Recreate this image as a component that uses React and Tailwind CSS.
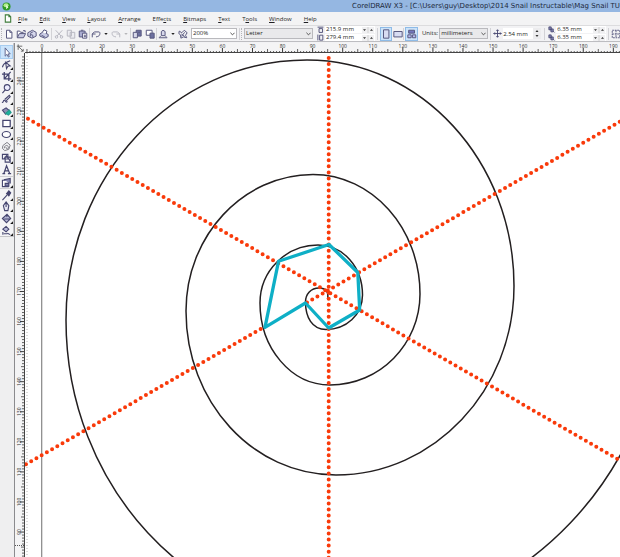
import React from "react";

const INK = "#45456f";

function Icon({ children, size = "size-[11px]", tone = "text-[#45456f]" }) {
  return (
    <svg viewBox="0 0 12 12" className={`${size} ${tone} shrink-0`} fill="none" stroke="currentColor" strokeWidth="1.2" aria-hidden="true">
      {children}
    </svg>
  );
}

const glyphs = {
  page: <path d="M3 1.5h4l2.5 2.5v7H3zM7 1.5V4h2.5" fill="#fff" />,
  open: (
    <>
      <path d="M1.5 10V2.5h3l1 1.5h3v1.5" fill="#fff" />
      <path d="M1.5 10.5 4 5.5h7.5l-2.5 5zM8.5 2h2.5v2" fill="#c9cbe4" />
    </>
  ),
  save: (
    <>
      <path d="M1 4.5 6.5 1.5 11 4v4.5L6 11 1 8.5z" fill="#d5d7ec" />
      <path d="M3.5 5.5 7 3.5M4 9V6.5l3 1V10" />
    </>
  ),
  print: (
    <>
      <path d="M1 6 5 3.500l6 3v2.500L7 11 1 8.500z" fill="#c9cbe4" />
      <path d="m4 4 2-3 3.500 1.500L8.500 6M3 7.500l4 2" fill="#fff" />
    </>
  ),
  cut: <path d="m2 1.500 6.500 7M10 1.500 3.500 8.500M1.500 9.500a1.500 1.500 0 1 0 3 0a1.500 1.500 0 1 0-3 0M7.500 9.500a1.500 1.500 0 1 0 3 0a1.500 1.500 0 1 0-3 0" />,
  copy: <path d="M1.500 1.500h5v7h-5zM5 4h5.500v7H5z" fill="#ececf1" />,
  paste: (
    <>
      <path d="M1.500 2.500h7v7h-7z" fill="#a9acd0" />
      <path d="M3.500 1.500h3M5.500 5h5v6h-5zM7 7.500h2.500M7 9.200h2.500" fill="#fff" />
    </>
  ),
  undo: <path d="M1.500 10V6h4M1.500 6 4 3.500h5.500c2 0 1.500 5-1.500 5.500l-2 .5" />,
  redo: <path d="M10.500 10V6h-4M10.500 6 8 3.500H2.500C.5 3.500 1 8.500 4 9l2 .5" />,
  importIcon: (
    <>
      <path d="M5 1.500h6v7H5z" fill="#6d70a0" />
      <path d="M1.500 4h5v6.500h-5zM7.500 4h2" fill="#d7d8ea" />
    </>
  ),
  exportIcon: (
    <>
      <path d="M1.500 1.500h7v6h-7z" fill="#fff" />
      <path d="M6 5h5v6H6z" fill="#6d70a0" />
    </>
  ),
  launch: (
    <>
      <path d="M4 8V3l2-1.500L8.500 3v5z" fill="#d7d8ea" />
      <path d="M1 10.500h10M3 8.500 2 10M9 8.500l1.500 1.500" />
    </>
  ),
  online: <path d="m1.500 2.500 3 2 3-3 3.500 3-2 3 1.500 3-4-1-3 1.500-.5-4-2-1.500zM4 6l4 3M8 4 4 9" />,
  portrait: <path d="M3 1h6.500v10H3z" fill="#d8dcf2" />,
  landscape: <path d="M1 3h10v6.500H1z" fill="#d8dcf2" />,
  allPages: (
    <>
      <path d="M2 1.500h7V5H2z" fill="#7377bd" />
      <path d="M1 7h4v3.500H1zM6.500 7h4v3.500h-4z" fill="#b7baee" />
    </>
  ),
  nudge: <path d="M6 1v10M1 6h10M4.500 2.500 6 1l1.500 1.500M4.500 9.500 6 11l1.500-1.500M2.500 4.500 1 6l1.500 1.500M9.500 4.500 11 6 9.500 7.500" />,
  snap: <path d="M1.500 1.500h9v9h-9zM1.500 6h9M6 1.500v9" strokeDasharray="2 1" />,
  widthIcon: <path d="M1 2h10M3.500 4.500h6V11h-6z" strokeWidth="1.500" />,
  heightIcon: <path d="M1.500 1v10M4.500 2H10v8.500H4.500z" strokeWidth="1.500" />,
  duplicate: <path d="M1.500 1.500h4v5h-4zM5 5h4v5H5zM9 9l2 2" fill="#8587b5" strokeWidth="1.400" />,
};

const tools = [
  { name: "Pick", art: <path d="M4.500 1v9l2-2 1.500 3 1-.5-1.300-3H10z" fill="#fff" stroke="#5a5f88" strokeWidth="1" /> },
  { name: "Shape", fly: true, art: <path d="M1.500 9C3 3 6 4 10 2M5 3.500l1 7 1.500-2.500L10 7.500z" /> },
  { name: "Crop", fly: true, art: <path d="M3.500 1v7.500H11M1 3.500h7.500V11M10.500 1 4 8" strokeWidth="1.400" /> },
  { name: "Zoom", fly: true, art: <path d="M3.500 5a3.200 3.200 0 1 0 6.400 0a3.200 3.200 0 1 0-6.400 0M4.500 7.500 1.500 11" fill="#eef" /> },
  { name: "Freehand", fly: true, art: <path d="M1 9c2 1 1-3 3-2s1 3 3 1M4 6l5-4.500L10 3 5.500 7.500" /> },
  { name: "Smart fill", fly: true, art: (
    <>
      <path d="m1.500 4.500 4-2.500 3.500 3-4 4z" fill="#8e90b4" />
      <path d="m5 8 4-3.500 2 2.500L8 10z" fill="#16b5a0" stroke="#249c8e" />
    </>
  ) },
  { name: "Rectangle", fly: true, art: <path d="M2 2.500h8v7H2z" fill="#fff" strokeWidth="1.400" /> },
  { name: "Ellipse", fly: true, art: <ellipse cx="5.800" cy="6" rx="4.500" ry="3.300" fill="#fff" strokeWidth="1.300" /> },
  { name: "Polygon", fly: true, art: <path d="m2 5 4.500-3.500L10 4.500 8.500 9 4 10.500 1.500 8zM3.500 8c0-4 4.500-4 4.500-1S5 8.500 5.500 6.500" stroke="#77777f" strokeWidth="1" /> },
  { name: "Basic shapes", fly: true, art: <path d="M1.500 1.500h6v5h-6zM4.500 4.500h5.500V10H4.500zM3 6.500 6 3l4 6" /> },
  { name: "Text", art: <path d="M1.500 10.500h3M7.500 10.500h3.500M3 10.500l3-8.500 3.500 8.500M4 7.500h4" strokeWidth="1.400" /> },
  { name: "Interactive blend", fly: true, divided: true, art: (
    <>
      <path d="M1.500 3.500h6.500v7H1.500z" fill="#fff" />
      <path d="M4.500 7h4v3h-4zM3 3l7-1.500V7" fill="#8688b3" />
    </>
  ) },
  { name: "Eyedropper", fly: true, divided: true, art: <path d="M1.500 11 6.500 5.500M6 4l2.500 2.500L10.500 3 8.500 1z" fill={INK} /> },
  { name: "Outline", fly: true, art: <path d="m5.500 1 3 4-1 5.500H4L2.500 5zM5.500 1v5.500" fill="#e5e5f1" /> },
  { name: "Fill", fly: true, art: <path d="m1.500 6 5-4.500L10.500 6l-4.500 4.500zM3.500 6.500h6M6 1.500l.500 3" fill="#b8bad8" /> },
  { name: "Interactive fill", fly: true, art: <path d="m2 4.500 3.500-3 3 3-3 3zM3 9.500h4M2 7.500v3M7 9l3 1.500" fill="#b8bad8" /> },
];

function ToolButton({ name, glyph, active, muted, fill }) {
  return (
    <button
      type="button"
      aria-label={name}
      className={`flex h-[14px] items-center justify-center ${fill || "flex-1"} ${active ? "border border-[#8ebbe7] bg-[#cce3f9]" : ""}`}
    >
      <Icon size="size-[10px]" tone={muted ? "text-[#b9b9c2]" : "text-[#5a5a80]"}>{glyphs[glyph]}</Icon>
    </button>
  );
}

function DropArrow({ name, muted }) {
  return (
    <button type="button" aria-label={name} className="flex h-[14px] w-2 items-center justify-center">
      <svg viewBox="0 0 5 3" className={`h-[2px] w-1 ${muted ? "text-[#b5b5b8]" : "text-[#222]"}`} fill="currentColor" aria-hidden="true">
        <path d="M0 0h5L2.500 3z" />
      </svg>
    </button>
  );
}

function Divider() {
  return <div className="h-3 w-px shrink-0 bg-[#d2d2d6]" />;
}

function Grip() {
  return <div className="mx-px h-3 w-px shrink-0 border-l border-dotted border-[#b4b4b8]" />;
}

function Picker({ label, value, width, tint }) {
  return (
    <div className={`relative shrink-0 ${width}`}>
      <select aria-label={label} defaultValue={value} className={`block h-[11px] w-full appearance-none border border-[#b9b9bd] pl-px leading-[9px] ${tint}`}>
        <option>{value}</option>
      </select>
      <svg viewBox="0 0 6 4" className="pointer-events-none absolute right-[2px] top-1 h-1 w-[5px]" fill="none" stroke="#555" strokeWidth="1.200" aria-hidden="true">
        <path d="m.5.5 2.500 2.500L5.500.5" />
      </svg>
    </div>
  );
}

function Spinner() {
  return (
    <svg viewBox="0 0 12 6" className="h-[6px] w-3 shrink-0 bg-[#f0f0f2]" aria-hidden="true">
      <path d="M1 2.200h3L2.500 4zM8 3.800h3L9.500 2z" fill="#333" />
      <path d="M6 0v6" stroke="#d0d0d0" />
    </svg>
  );
}

function Pair({ rows }) {
  return (
    <div className="flex shrink-0 flex-col gap-px">
      {rows.map((r) => (
        <label key={r.label} className="flex h-[7px] items-center gap-px">
          <Icon size="size-[7px]">{glyphs[r.glyph]}</Icon>
          <span className="flex h-[7px] w-[50px] items-center bg-white">
            <input aria-label={r.label} defaultValue={r.value} className="h-[7px] w-[37px] min-w-0 bg-transparent pl-px leading-[7px] outline-none" />
            <Spinner />
          </span>
        </label>
      ))}
    </div>
  );
}

const menus = [
  ["", "F", "ile"],
  ["", "E", "dit"],
  ["", "V", "iew"],
  ["", "L", "ayout"],
  ["", "A", "rrange"],
  ["Effe", "c", "ts"],
  ["", "B", "itmaps"],
  ["", "T", "ext"],
  ["T", "o", "ols"],
  ["", "W", "indow"],
  ["", "H", "elp"],
];

function TitleBar() {
  return (
    <header className="flex h-3 shrink-0 items-center bg-[#95b7e2] pl-[2px] text-[7px] leading-[12px] text-[#1d2a3c] [font-family:'DejaVu_Sans','Noto_Sans',sans-serif]">
      <svg viewBox="0 0 10 10" className="size-[9px] shrink-0" aria-hidden="true">
        <circle cx="5" cy="5" r="4.500" fill="#2f9a24" />
        <ellipse cx="4.500" cy="3.600" rx="2.800" ry="2.200" fill="#b5ed91" />
        <path d="M5 3 7 6 4.500 8z" fill="#f2ffe8" />
      </svg>
      <h1 className="ml-[341px] whitespace-nowrap">{"CorelDRAW X3 - [C:\\Users\\guy\\Desktop\\2014 Snail Instructable\\Mag Snail TU"}</h1>
    </header>
  );
}

function MenuBar() {
  return (
    <nav className="flex h-[14px] shrink-0 items-center border-b border-[#dcdcde] bg-[#f3f3f4] pl-1 leading-[10px]">
      <svg viewBox="0 0 8 10" className="mr-[6px] h-[9px] w-2 shrink-0" fill="#fff" stroke="#3f7d3b" strokeWidth="1.200" aria-hidden="true">
        <path d="M1 1h4l2 2v6H1zM5 1v2h2" />
      </svg>
      <div className="flex gap-3">
        {menus.map(([before, key, after]) => (
          <button type="button" key={before + key + after} className="whitespace-nowrap">
            {before}
            <span className="underline decoration-1 underline-offset-1">{key}</span>
            {after}
          </button>
        ))}
      </div>
    </nav>
  );
}

function ToolBar() {
  return (
    <div className="flex h-4 shrink-0 items-center overflow-hidden border-b border-[#bdbdc1] bg-[#f2f2f4]">
      <Grip />
      <div className="flex w-[47px] shrink-0">
        <ToolButton name="New" glyph="page" />
        <ToolButton name="Open" glyph="open" />
        <ToolButton name="Save" glyph="save" />
        <ToolButton name="Print" glyph="print" />
      </div>
      <div className="mx-px"><Divider /></div>
      <div className="flex w-9 shrink-0">
        <ToolButton name="Cut" glyph="cut" muted />
        <ToolButton name="Copy" glyph="copy" muted />
        <ToolButton name="Paste" glyph="paste" />
      </div>
      <Divider />
      <div className="flex w-10 shrink-0">
        <ToolButton name="Undo" glyph="undo" />
        <DropArrow name="Undo list" />
        <ToolButton name="Redo" glyph="redo" muted />
        <DropArrow name="Redo list" muted />
      </div>
      <Divider />
      <div className="flex w-[25px] shrink-0">
        <ToolButton name="Import" glyph="importIcon" />
        <ToolButton name="Export" glyph="exportIcon" />
      </div>
      <Divider />
      <div className="flex w-8 shrink-0">
        <ToolButton name="Application launcher" glyph="launch" />
        <DropArrow name="Application list" />
        <ToolButton name="Corel online" glyph="online" />
      </div>
      <div className="mx-[2px] flex shrink-0">
        <Picker label="Zoom level" value="200%" width="w-[46px]" tint="bg-white" />
      </div>
      <Divider />
      <Grip />
      <div className="ml-px mr-1 flex shrink-0">
        <Picker label="Paper type" value="Letter" width="w-[69px]" tint="bg-[#e9e9eb]" />
      </div>
      <Pair rows={[{ label: "Paper width", glyph: "widthIcon", value: "215.9 mm" }, { label: "Paper height", glyph: "heightIcon", value: "279.4 mm" }]} />
      <div className="mx-[2px]"><Divider /></div>
      <div className="flex shrink-0">
        <ToolButton name="Portrait" glyph="portrait" active fill="w-3" />
        <ToolButton name="Landscape" glyph="landscape" fill="w-[11px]" />
      </div>
      <div className="mr-px"><Divider /></div>
      <ToolButton name="Set for all pages" glyph="allPages" active fill="w-[13px] shrink-0" />
      <label className="ml-1 flex shrink-0 items-center gap-px">
        Units:
        <Picker label="Units" value="millimeters" width="w-[49px]" tint="bg-[#e9e9eb]" />
      </label>
      <div className="mx-[2px]"><Divider /></div>
      <label className="flex shrink-0 items-center gap-px">
        <Icon size="size-[9px]">{glyphs.nudge}</Icon>
        <span className="flex h-[11px] w-[38px] items-center bg-white">
          <input aria-label="Nudge offset" defaultValue="2.54 mm" className="h-[11px] w-[30px] min-w-0 bg-transparent outline-none" />
          <svg viewBox="0 0 8 11" className="h-[11px] w-2 shrink-0 bg-[#ececee]" fill="#333" aria-hidden="true">
            <path d="M2.500 4h3L4 2zM2.500 7h3L4 9z" />
          </svg>
        </span>
      </label>
      <div className="mx-[3px]"><Divider /></div>
      <Pair rows={[{ label: "Duplicate distance x", glyph: "duplicate", value: "6.35 mm" }, { label: "Duplicate distance y", glyph: "duplicate", value: "6.35 mm" }]} />
      <div className="mx-[2px]"><Divider /></div>
      <ToolButton name="Snap to grid" glyph="snap" fill="w-[10px] shrink-0" />
    </div>
  );
}

function ToolBox() {
  return (
    <aside className="w-[14px] shrink-0 bg-[#efeff0]">
      <div className="flex h-[194px] flex-col border-b border-r border-[#c5c5c8] bg-[#f4f4f6] pt-[2px]">
        {tools.map((t, i) => (
          <button
            type="button"
            key={t.name}
            aria-label={t.name}
            className={`flex min-h-0 w-full items-center justify-center ${i === 0 ? "h-[14px] shrink-0 border border-[#a8cdf0] bg-[#cce4fb]" : "flex-1"} ${t.divided ? "border-t border-[#cfcfd3]" : ""}`}
          >
            <svg viewBox="0 0 13 12" className="h-[11px] w-3 shrink-0" fill="none" stroke={INK} strokeWidth="1.200" aria-hidden="true">
              {t.art}
              {t.fly && <path d="M13 9V12H10z" fill="#111" stroke="none" />}
            </svg>
          </button>
        ))}
      </div>
    </aside>
  );
}

const UNIT = 30.07;
const range = (from, to) => Array.from({ length: to - from }, (_, i) => from + i);

function TopRuler() {
  return (
    <svg className="block h-[10px] min-w-0 flex-1 bg-[#f4f4f5]" aria-label="Horizontal ruler">
      {range(-5, 640).map((n) => {
        const x = 17 + (n * UNIT) / 10;
        const h = n % 10 === 0 ? 5 : n % 5 === 0 ? 4 : 2;
        return <path key={n} d={`M${x} ${10 - h}V10`} stroke="#3a3a3a" strokeWidth={n % 10 === 0 ? 1 : 0.8} />;
      })}
      {range(0, 20).map((n) => (
        <text key={n} x={17 + n * UNIT} y="5" textAnchor="middle" fontSize="5" fill="#333">{n * 10}</text>
      ))}
      <path d="M0 9.500H4000" stroke="#444" />
    </svg>
  );
}

function SideRuler() {
  return (
    <svg className="block h-full w-[11px] shrink-0 border-l border-[#8b8b8e] bg-[#f4f4f5]" aria-label="Vertical ruler">
      {range(-8, 400).map((n) => {
        const y = 28 + (n * UNIT) / 10;
        const w = n % 10 === 0 ? 5 : n % 5 === 0 ? 4 : 3;
        return <path key={n} d={`M${10 - w} ${y}H10`} stroke="#3a3a3a" strokeWidth={n % 10 === 0 ? 1 : 0.8} />;
      })}
      {range(0, 16).map((n) => (
        <text key={n} transform={`translate(6 ${28 + n * UNIT}) rotate(-90)`} textAnchor="middle" fontSize="5" fill="#333">{240 - n * 10}</text>
      ))}
      <path d="M9.500 0V4000" stroke="#444" />
      <path d="M0 492.500H10" stroke="#555" strokeDasharray="1 1" />
    </svg>
  );
}

function Drawing() {
  return (
    <svg className="block h-full min-w-0 flex-1 bg-white" aria-label="Snail spiral drawing">
      <g transform="translate(-25 -53)" fill="none">
        <path d="M27 53V4000" stroke="#b6b6b6" strokeDasharray="1 2" />
        <path d="M41.700 53V4000" stroke="#858585" strokeWidth="1.200" />
        <path
          d="M327.500 299C329 292 326 288 319 288C311 288 305.500 294 305.500 302C305.500 317 312 329.500 326 329.500C346 329.500 362.500 315 362.500 295C362.500 267 343 245 318 245C286 245 260 271 260 303C260 348 291 385 330 385C380 385 420 344 420 294C420 228 372 174.500 313 174.500C243 174.500 186 236 186 311C186 402 253 475 336 475C434 475 514 390 514 286C514 161 421 60 307 60C174 60 66 176 66 320C66 486 191 621 345 621C521 621 664 471 664 285"
          stroke="#231f20"
          strokeWidth="1.500"
        />
        <g stroke="#f93a0a" strokeWidth="4" strokeLinecap="round" strokeDasharray="0 6.020">
          <path d="M328.700 58V4000" />
          <path d="M28 118.700 618 459.300" />
          <path d="M26 464.300 264 327" />
          <path d="M307 302.500 640 110" />
        </g>
        <path d="M305.500 303 265 327.300 278.500 261.300 329 244.500 357.800 272.500 359.700 310 328.700 328z" stroke="#0eafc6" strokeWidth="3.300" strokeLinejoin="round" />
      </g>
    </svg>
  );
}

export default function App() {
  return (
    <div className="flex h-screen flex-col overflow-hidden bg-[#f2f2f4] text-[6px] text-[#1f1f24] [font-family:'Open_Sans','Noto_Sans',sans-serif]">
      <TitleBar />
      <MenuBar />
      <ToolBar />
      <div className="flex min-h-0 flex-1 pt-px">
        <ToolBox />
        <main className="flex min-w-0 flex-1 flex-col">
          <div className="flex shrink-0">
            <svg viewBox="0 0 11 10" className="h-[10px] w-[11px] shrink-0 border-l border-[#8b8b8e] bg-[#f4f4f5]" fill="none" stroke="#555" strokeWidth="0.900" aria-hidden="true">
              <path d="M2 3h6M3.500 1v6M4 3.500l5 5M9 6v2.500H6.500" />
            </svg>
            <TopRuler />
          </div>
          <div className="flex min-h-0 flex-1">
            <SideRuler />
            <Drawing />
          </div>
        </main>
      </div>
    </div>
  );
}
